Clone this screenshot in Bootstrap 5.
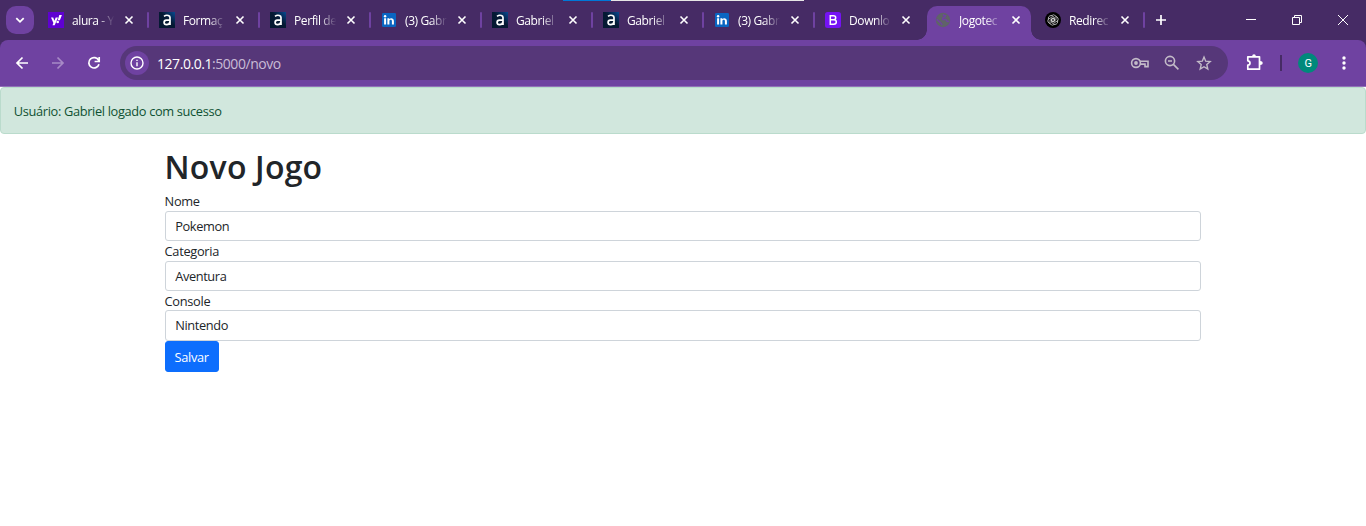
<!DOCTYPE html>
<html lang="pt-BR">
<head>
<meta charset="utf-8">
<meta name="viewport" content="width=device-width, initial-scale=1">
<title>Jogoteca</title>
<link href="https://cdn.jsdelivr.net/npm/bootstrap@5.3.0/dist/css/bootstrap.min.css" rel="stylesheet">
<style>
  html { font-size: 12.8px; }
  body { font-family: "Open Sans", "Noto Sans", sans-serif; overflow: hidden; letter-spacing: -.3px; }
  svg { display: block; flex: none; }
  .tabstrip { height: 40px; background: #462b65; padding-left: 6px; color: #fff; }
  .search-tabs { width: 28px; height: 28px; border-radius: 10px; background: #6f42a1; margin-right: 4px; }
  .tab { width: 111px; height: 34px; padding-left: 10px; flex: none; }
  .tab.narrow { width: 110px; }
  .tab-title { width: 43px; margin: 0 6px 0 8px; padding-top: 2px; overflow: hidden; white-space: nowrap; font-size: 12px; line-height: 18px; letter-spacing: -.4px;
    -webkit-mask-image: linear-gradient(90deg, #000 60%, transparent 98%); mask-image: linear-gradient(90deg, #000 60%, transparent 98%); }
  .tab-line { width: 2px; height: 16px; background: #6f42a1; border-radius: 1px; margin-left: 10px; }
  .tab.current { background: #6f42a1; width: 104px; margin: 0 4px 0 2px; padding: 0 0 6px 8px; border-radius: 10px 10px 0 0; }
  .tab.current::before, .tab.current::after { content: ""; position: absolute; bottom: 0; width: 10px; height: 10px; }
  .tab.current::before { left: -10px; background: radial-gradient(circle at 0 0, transparent 9.5px, #6f42a1 10px); }
  .tab.current::after { right: -10px; background: radial-gradient(circle at 100% 0, transparent 9.5px, #6f42a1 10px); }
  .progress-line { left: 563px; width: 241px; height: 1px; background: linear-gradient(90deg, #0078d7 48px, #e6e6e6 48px); }
  .chrome { background: #462b65; }
  .toolbar { height: 47px; background: #6f42a1; border-bottom: 1px solid #9270b8; border-radius: 8px 8px 0 0; padding-left: 14px; color: #fff; }
  .omnibox { width: 1108px; height: 34px; border-radius: 17px; background: #563779; margin-left: 18px; padding: 0 15px 0 5px; }
  .site-info { width: 24px; height: 24px; border-radius: 50%; background: #6f42a1; }
  .address { font-size: 14px; margin-left: 8px; letter-spacing: -.45px; color: #c9bcd6; }
  .address span { color: #fff; }
  .page { max-width: 1056px; }
  .alert { height: 46.8px; padding-top: 13.8px; border-radius: 4px; border-color: #badbcc; color: #0f5132; letter-spacing: -.34px; }
  .page h1 { font-size: 32px; font-weight: 600; letter-spacing: .2px; padding-top: 1px; margin-bottom: 5.4px; }
  .page label { display: block; height: 19.6px; padding-top: 1px; }
  .page .form-control { height: 30.2px; border-radius: 3px; border-color: #ced4da; letter-spacing: -.38px; }
  .page label:nth-of-type(3) { height: 19px; }
  .page #console { height: 30.8px; }
  .page .btn { height: 31px; width: 54px; padding: 6px 0 4px; border-radius: 3px; letter-spacing: -.3px; }
</style>
</head>
<body>
<svg width="0" height="0" class="position-absolute">
  <symbol id="x" viewBox="0 0 16 16"><path d="M4.500 4.500l7 7M11.500 4.500l-7 7" stroke="#fff" stroke-width="1.600" fill="none"/></symbol>
  <linearGradient id="navy" x1="0" y1="1" x2="1" y2="0"><stop offset=".55" stop-color="#051933"/><stop offset="1" stop-color="#084a91"/></linearGradient>
  <symbol id="alura" viewBox="0 0 16 16"><path fill="url(#navy)" d="M0 0h16v16H0z"/><path d="M5 4.400Q7.800 2.200 10.600 4.200Q11.200 5 11 7.500V13M11 8.200H7.400Q5.100 8.300 5.100 10.500T7.500 12.700Q10.800 12.700 11 9.500" fill="none" stroke="#fff" stroke-width="1.700"/></symbol>
  <symbol id="linkedin" viewBox="0 0 16 16"><rect x="1" y="1" width="14" height="14" rx="1.200" fill="#0a66c2"/><path d="M3.100 6.300h2v6.300h-2zM6.400 6.300h1.900v.9c1-1.500 4.600-1.500 4.600 1.800v3.600h-2V9.300c0-2-2.500-1.800-2.500 0v3.300h-2z" fill="#fff"/><circle cx="4.100" cy="4.200" r="1.200" fill="#fff"/></symbol>
</svg>

<header class="chrome">
  <div class="progress-line position-absolute top-0"></div>
  <div class="tabstrip d-flex align-items-center">
    <div class="search-tabs d-flex align-items-center justify-content-center"><svg width="12" height="12" viewBox="0 0 12 12"><path d="M2.300 4.200L6 7.800l3.700-3.600" fill="none" stroke="#fff" stroke-width="1.800"/></svg></div>
    <div class="tab d-flex align-items-center"><svg width="16" height="16" viewBox="0 0 16 16"><path fill="#5f01d1" d="M0 0h16v16H0z"/><path d="M3 5.500h2.200l1.200 3.200 1.300-3.200H10L6.700 13.200H4.500l.9-2.100zM11.300 3h2.600l-2 5.200H9.700z" fill="#fff"/><circle cx="9.700" cy="10" r="1.300" fill="#fff"/></svg><div class="tab-title">alura - Y</div><svg width="16" height="16"><use href="#x"/></svg><i class="tab-line"></i></div>
    <div class="tab d-flex align-items-center"><svg width="16" height="16"><use href="#alura"/></svg><div class="tab-title">Formaç</div><svg width="16" height="16"><use href="#x"/></svg><i class="tab-line"></i></div>
    <div class="tab d-flex align-items-center"><svg width="16" height="16"><use href="#alura"/></svg><div class="tab-title">Perfil de</div><svg width="16" height="16"><use href="#x"/></svg><i class="tab-line"></i></div>
    <div class="tab d-flex align-items-center"><svg width="16" height="16"><use href="#linkedin"/></svg><div class="tab-title">(3) Gabr</div><svg width="16" height="16"><use href="#x"/></svg><i class="tab-line"></i></div>
    <div class="tab d-flex align-items-center"><svg width="16" height="16"><use href="#alura"/></svg><div class="tab-title">Gabriel</div><svg width="16" height="16"><use href="#x"/></svg><i class="tab-line"></i></div>
    <div class="tab d-flex align-items-center"><svg width="16" height="16"><use href="#alura"/></svg><div class="tab-title">Gabriel</div><svg width="16" height="16"><use href="#x"/></svg><i class="tab-line"></i></div>
    <div class="tab d-flex align-items-center"><svg width="16" height="16"><use href="#linkedin"/></svg><div class="tab-title">(3) Gabr</div><svg width="16" height="16"><use href="#x"/></svg><i class="tab-line"></i></div>
    <div class="tab narrow d-flex align-items-center"><svg width="16" height="16" viewBox="0 0 16 16"><rect width="16" height="16" rx="2.500" fill="#7512f5"/><path d="M5.300 3.700h3.200q2.200 0 2.200 2T8.600 7.800H5.300zM5.300 7.800h3.500q2.500 0 2.500 2.200t-2.500 2.200H5.300z" fill="none" stroke="#fff" stroke-width="1.500"/></svg><div class="tab-title">Downlo</div><svg width="16" height="16"><use href="#x"/></svg></div>
    <div class="tab current position-relative d-flex align-items-center align-self-end"><svg width="16" height="16" viewBox="0 0 16 16"><circle cx="8" cy="8" r="7.200" fill="#5f6368"/><path d="M8.600 2.200c-.4 1 .3 1.700 2 1.500-.2 1.700-1.400 1.900-2.700 2.100l-.1 1.800h2.800c1.200.2 1 2 2.300 1.900l1-.4M1.600 7.400l3.500 2.800c.4 1.200 1.700 1 1.800 2.900" fill="none" stroke="#6f42a1" stroke-width="1.500"/></svg><div class="tab-title">Jogotec</div><svg width="16" height="16"><use href="#x"/></svg></div>
    <div class="tab narrow d-flex align-items-center"><svg width="16" height="16" viewBox="0 0 16 16"><circle cx="8" cy="8" r="8" fill="#000"/><g fill="none" stroke="#ddd" stroke-width=".7"><path id="knot" d="M6.200 3.800Q8.800 1.500 11 4.200V7.800L8 9.600 6 8.400"/><use href="#knot" transform="rotate(60 8 8)"/><use href="#knot" transform="rotate(120 8 8)"/><use href="#knot" transform="rotate(180 8 8)"/><use href="#knot" transform="rotate(240 8 8)"/><use href="#knot" transform="rotate(300 8 8)"/></g></svg><div class="tab-title">Redirec</div><svg width="16" height="16"><use href="#x"/></svg><i class="tab-line"></i></div>
    <svg class="ms-auto" width="221" height="40" viewBox="1145 0 221 40"><g fill="none" stroke="#fff"><path d="M1161 15v10M1156 20h10" stroke-width="1.700"/><path d="M1246 19.500h10M1292.500 17.500h7v7h-7zM1294.500 17.500v-2h7v7h-2M1338 15l10 10M1348 15l-10 10"/></g></svg>
  </div>
  <div class="toolbar d-flex align-items-center">
    <svg width="88" height="16" viewBox="14 55 88 16" fill="none" stroke="#fff" stroke-width="1.700"><path d="M28 63H17M22.500 57.500L17 63l5.500 5.500"/><path d="M52 63h11M57.500 57.500L63 63l-5.500 5.500" stroke="#a78ac6"/><path d="M98.700 60.500A5.200 5.200 0 1 0 99 64.300M99.200 57v4.500h-4.600"/></svg>
    <div class="omnibox d-flex align-items-center flex-shrink-0">
      <div class="site-info d-flex align-items-center justify-content-center"><svg width="16" height="16" viewBox="0 0 16 16"><circle cx="8" cy="8" r="6" fill="none" stroke="#fff" stroke-width="1.400"/><path d="M7.300 7.300h1.400v3.900H7.300zM7.300 4.700h1.400v1.400H7.300z" fill="#fff"/></svg></div>
      <div class="address"><span>127.0.0.1</span>:5000/novo</div>
      <svg class="ms-auto" width="84" height="20" viewBox="1129 53 84 20" fill="none" stroke="#c3bbc8" stroke-width="1.600"><circle cx="1136" cy="63" r="4.400"/><circle cx="1136" cy="63" r="1.900" fill="#c3bbc8" stroke="none"/><path d="M1140 61.200h8v5.400h-3v-2.500h-5"/><circle cx="1170" cy="61" r="4.600"/><path d="M1168 61h4M1173.400 64.400l5 5"/><path d="M1204 57l1.700 4.200 4.500.4-3.400 3 1 4.400-3.800-2.300-3.800 2.300 1-4.400-3.400-3 4.500-.4z" stroke-width="1.400"/></svg>
    </div>
    <svg width="138" height="24" viewBox="1228 51 138 24"><path d="M1247.800 56.800h11.700v12.400h-11.700v-4q2.200-.2 2.200-2.200t-2.200-2.200z" fill="none" stroke="#fff" stroke-width="1.700" stroke-linejoin="round"/><path d="M1252 56.500q.3-2.300 2-2.300t2 2.300zM1260 61q2.800.2 2.800 2t-2.800 2z" fill="#fff"/><path d="M1280 55h2v16h-2z" fill="#462b65"/><circle cx="1308" cy="63" r="10" fill="#00897b"/><text x="1308" y="67" text-anchor="middle" fill="#fff" font-family="Roboto, sans-serif" font-size="11">G</text><g fill="#fff"><circle cx="1344" cy="58" r="1.700"/><circle cx="1344" cy="63" r="1.700"/><circle cx="1344" cy="68" r="1.700"/></g></svg>
  </div>
</header>

<div class="alert alert-success mb-3" role="alert">Usuário: Gabriel logado com sucesso</div>
<main class="container page">
  <h1>Novo Jogo</h1>
  <form>
    <label for="nome">Nome</label>
    <input class="form-control" id="nome" value="Pokemon">
    <label for="categoria">Categoria</label>
    <input class="form-control" id="categoria" value="Aventura">
    <label for="console">Console</label>
    <input class="form-control" id="console" value="Nintendo">
    <button class="btn btn-primary" type="button">Salvar</button>
  </form>
</main>
<script src="https://cdn.jsdelivr.net/npm/bootstrap@5.3.0/dist/js/bootstrap.bundle.min.js"></script>
</body>
</html>
